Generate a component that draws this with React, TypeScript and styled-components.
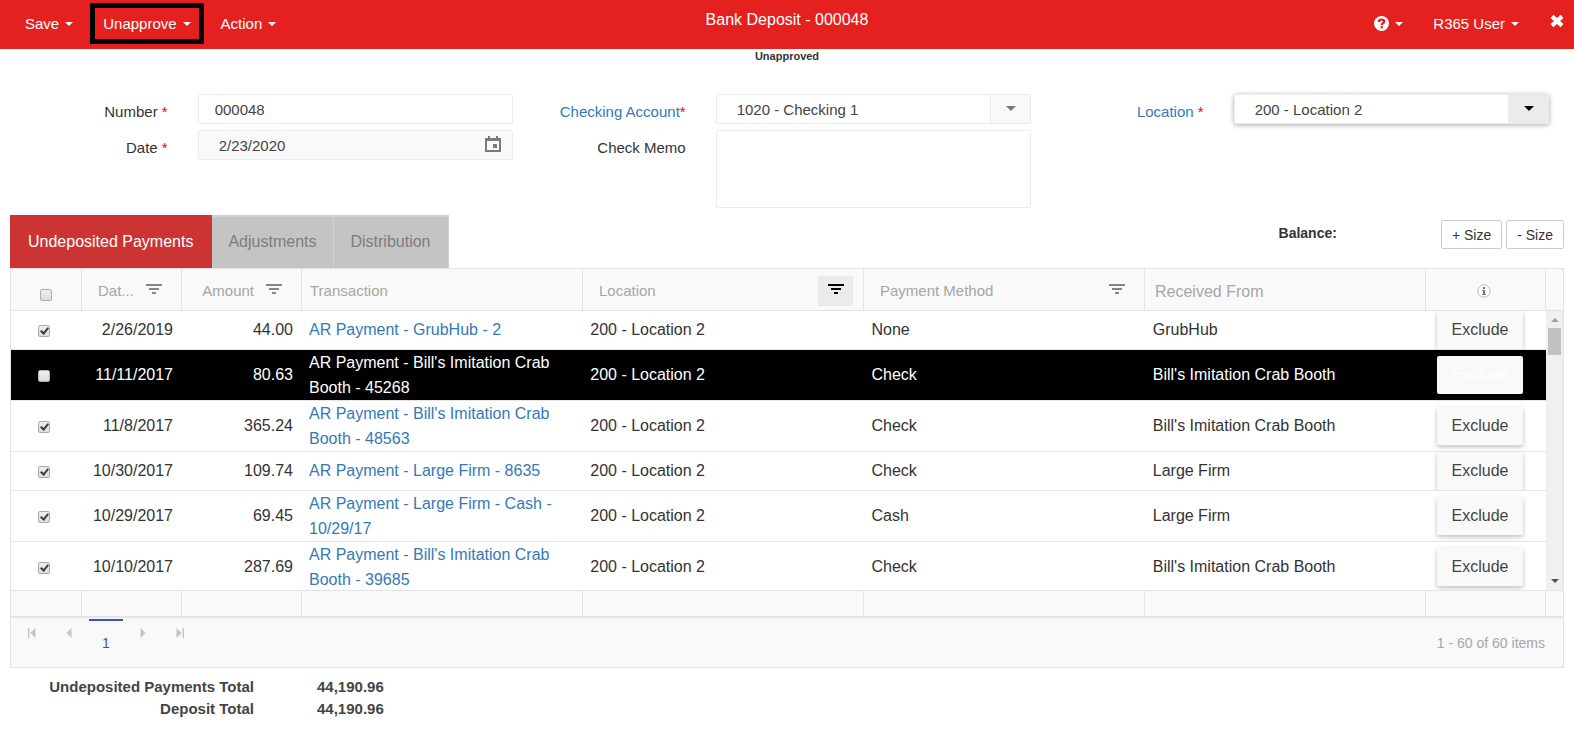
import React from "react";
import styled, { createGlobalStyle, css } from "styled-components";

const GlobalStyle = createGlobalStyle`
  *, *::before, *::after { box-sizing: border-box; }
  body {
    margin: 0;
    background: #fff;
    color: #333;
    font-family: "Liberation Sans", Arial, Helvetica, sans-serif;
    font-size: 15px;
    line-height: 20px;
  }
  button, input, select, textarea { font: inherit; color: inherit; margin: 0; }
  a { color: #337ab7; text-decoration: none; }
`;

/* ---------- top bar ---------- */

const TopBar = styled.header`
  display: grid;
  grid-template-columns: 1fr auto 1fr;
  height: 49px;
  background: #e4211f;
  color: #fff;
`;

const Menu = styled.nav`
  display: flex;
  align-items: flex-start;
  gap: 4px;
  padding: 3px 0 0 12px;
`;

const MenuButton = styled.button<{ $outlined?: boolean }>`
  display: flex;
  align-items: center;
  gap: 6px;
  height: 41px;
  padding: 0 8px;
  border: 5px solid ${(p) => (p.$outlined ? "#000" : "transparent")};
  background: none;
  white-space: nowrap;
`;

const Caret = styled.span<{ $size?: number }>`
  width: 0;
  height: 0;
  border: ${(p) => p.$size ?? 4}px solid transparent;
  border-top-color: currentColor;
  border-bottom: 0;
`;

const Title = styled.h1`
  margin: 0;
  font-size: 16px;
  font-weight: 400;
  line-height: 40px;
`;

const UserMenu = styled(Menu)`
  justify-content: flex-end;
  padding: 3px 10px 0 0;
`;

const CloseButton = styled.button`
  display: flex;
  padding: 11px 0 0 14px;
  border: 0;
  background: none;
`;

const Status = styled.div`
  font-size: 11px;
  font-weight: 700;
  line-height: 14px;
  text-align: center;
`;

/* ---------- form ---------- */

const Page = styled.main`
  padding: 0 10px;
`;

const Form = styled.form`
  display: grid;
  grid-template-columns: repeat(3, 1fr);
  padding-top: 31px;
`;

const FormColumn = styled.div`
  display: flex;
  flex-direction: column;
  gap: 6px;
`;

const FormRow = styled.div`
  display: grid;
  grid-template-columns: 1fr 2fr;
`;

const Label = styled.label`
  padding: 8px 15px 0;
  text-align: right;
  white-space: nowrap;
`;

const Required = styled.span`
  color: #f00;
`;

const Field = styled.div`
  padding: 0 15px;
`;

const control = css`
  border: 1px solid #ebebeb;
  border-radius: 2px;
  background: #fff;
  color: #444;
`;

const Control = styled.div<{ $muted?: boolean; $raised?: boolean }>`
  ${control}
  display: flex;
  height: 30px;
  overflow: hidden;
  ${(p) => p.$muted && "background: #f9f9f9;"}
  ${(p) => p.$raised && "box-shadow: 0 1px 5px rgba(0, 0, 0, 0.35);"}
`;

const TextInput = styled.input`
  flex: 1;
  min-width: 0;
  padding: 2px 16px 0;
  border: 0;
  outline: 0;
  background: none;
`;

const DateInput = styled(TextInput)`
  padding: 2px 20px 0;
`;

const IconButton = styled.button`
  display: flex;
  align-items: center;
  padding: 0 11px 2px;
  border: 0;
  background: none;
  color: #7a7a7a;
`;

const SelectBox = styled.div`
  position: relative;
  flex: 1;
  display: flex;
`;

const Select = styled.select`
  flex: 1;
  min-width: 0;
  appearance: none;
  padding: 2px 60px 0 20px;
  border: 0;
  outline: 0;
  background: none;
`;

const SelectArrow = styled.span<{ $active?: boolean }>`
  position: absolute;
  top: 0;
  right: 0;
  bottom: 0;
  display: flex;
  align-items: center;
  justify-content: center;
  width: 40px;
  padding-bottom: 2px;
  border-left: 1px solid #ebebeb;
  background: ${(p) => (p.$active ? "#ebebeb" : "#f9f9f9")};
  color: ${(p) => (p.$active ? "#000" : "#7a7a7a")};
  pointer-events: none;
`;

const Memo = styled.textarea`
  ${control}
  display: block;
  width: 100%;
  height: 78px;
  padding: 4px 16px;
  resize: none;
`;

/* ---------- tabs ---------- */

const TabBar = styled.div`
  display: flex;
  justify-content: space-between;
  align-items: flex-start;
  margin-top: 7px;
`;

const Tabs = styled.div`
  display: flex;
`;

const Tab = styled.button<{ $active?: boolean }>`
  height: 53px;
  padding: 0 17px 2px 16px;
  border: solid #d2d2d2;
  border-width: 2px 1px 0 0;
  background: #c4c4c4;
  color: #7d7d7d;
  font-size: 16px;
  ${(p) => p.$active && "padding: 0 18px 2px; border-color: #c33; background: #c33; color: #fff;"}
`;

const TabTools = styled.div`
  display: flex;
  align-items: flex-start;
  gap: 4px;
  padding-top: 5px;
`;

const Balance = styled.strong`
  margin-right: 100px;
  font-size: 14px;
  line-height: 26px;
`;

const SizeButton = styled.button`
  height: 29px;
  padding: 0 10px;
  border: 1px solid #ccc;
  border-radius: 2px;
  background: #fff;
  font-size: 14px;
`;

/* ---------- grid ---------- */

const Grid = styled.section`
  border: 1px solid #e4e4e4;
  background: #f9f9f9;
`;

const GridStrip = styled.div`
  display: grid;
  grid-template-columns: 1fr 17px;
`;

const Table = styled.table`
  width: 100%;
  border-collapse: separate;
  border-spacing: 0;
  table-layout: fixed;
`;

const StripTable = styled(Table)`
  border-right: 1px solid #e4e4e4;
`;

const HeadCell = styled.th`
  height: 42px;
  padding: 0 0 0 8px;
  border: solid #e4e4e4;
  border-width: 0 0 1px 1px;
  color: #a6a6a6;
  font-weight: 400;
  text-align: left;
  &:first-child { border-left: 0; }
`;

const HeadCorner = styled.div`
  border-bottom: 1px solid #e4e4e4;
`;

const HeadFlex = styled.div<{ $right?: boolean }>`
  display: flex;
  align-items: center;
  padding: 2px 10px 0 8px;
  & > span {
    flex: 1;
    padding-right: ${(p) => (p.$right ? 2 : 0)}px;
    text-align: ${(p) => (p.$right ? "right" : "left")};
    white-space: nowrap;
  }
`;

const FilterButton = styled.button<{ $active?: boolean }>`
  display: flex;
  flex: none;
  justify-content: center;
  width: 35px;
  height: 30px;
  padding: 8px 0 0;
  border: 0;
  background: ${(p) => (p.$active ? "#ebebeb" : "transparent")};
  color: ${(p) => (p.$active ? "#000" : "#858585")};
`;

const PlainHead = styled.div<{ $large?: boolean }>`
  padding: ${(p) => (p.$large ? "4px 0 0 2px" : "3px 0 0")};
  font-size: ${(p) => (p.$large ? 16 : 15)}px;
`;

const CenterHead = styled.div`
  display: flex;
  justify-content: center;
  padding: 3px 12px 0 0;
`;

const CheckCenter = styled.div`
  padding: 10px 8px 0 0;
`;

const TableArea = styled.div`
  display: flex;
  height: 279px;
  overflow: hidden;
  background: #fff;
`;

const TableView = styled.div`
  flex: 1;
  overflow: hidden;
`;

const Row = styled.tr<{ $selected?: boolean }>`
  background: ${(p) => (p.$selected ? "#000" : "#fff")};
  color: ${(p) => (p.$selected ? "#fff" : "#333")};
  & a { color: ${(p) => (p.$selected ? "#fff" : "#337ab7")}; }
`;

const Cell = styled.td<{ $right?: boolean }>`
  overflow: hidden;
  padding: 0 8px;
  border-bottom: 1px solid #e4e4e4;
  font-size: 16px;
  line-height: 25px;
  text-align: ${(p) => (p.$right ? "right" : "left")};
`;

const CellText = styled.div`
  min-height: 26px;
`;

const CheckCell = styled(Cell)`
  padding: 2px 4px 0 0;
`;

const ActionCell = styled(Cell)`
  padding: 0 11px;
`;

const Checkbox = styled.input.attrs({ type: "checkbox" })`
  display: block;
  width: 12px;
  height: 12px;
  margin: 0 auto;
  appearance: none;
  border: 1px solid #ababab;
  border-radius: 2px;
  background: linear-gradient(#f0f0f0, #dcdcdc);
  &:checked::after {
    content: "";
    display: block;
    width: 5px;
    height: 8px;
    margin: 0 0 0 3px;
    border: solid #3c3c3c;
    border-width: 0 2px 2px 0;
    transform: rotate(40deg);
  }
`;

const ExcludeButton = styled.button<{ $selected?: boolean }>`
  display: block;
  width: 86px;
  height: 38px;
  padding: 0 0 2px;
  border: 0;
  border-radius: 2px;
  background: #f9f9f9;
  color: ${(p) => (p.$selected ? "#fff" : "#444")};
  box-shadow: 0 2px 5px rgba(0, 0, 0, 0.26);
`;

const ScrollTrack = styled.div`
  display: flex;
  flex-direction: column;
  align-items: center;
  justify-content: space-between;
  width: 17px;
  padding: 7px 0;
  background: #f0f0f0;
  color: #505050;
`;

const ScrollTop = styled.div`
  display: flex;
  flex-direction: column;
  align-items: center;
  gap: 6px;
`;

const UpArrow = styled.span`
  border: 4px solid transparent;
  border-top: 0;
  border-bottom-color: #a0a0a0;
`;

const ScrollThumb = styled.span`
  width: 13px;
  height: 27px;
  background: #c1c1c1;
`;

const FootCell = styled.td`
  height: 26px;
  padding: 0;
  border: solid #e4e4e4;
  border-width: 1px 0 0 1px;
  &:first-child { border-left: 0; }
`;

const FootCorner = styled.div`
  border-top: 1px solid #e4e4e4;
`;

const Pager = styled.footer`
  display: flex;
  gap: 1px;
  height: 51px;
  padding: 0 18px 0 3px;
  border-top: 2px solid #e4e4e4;
  color: #a6a6a6;
  font-size: 14px;
`;

const PageArrow = styled.button`
  display: flex;
  justify-content: center;
  align-items: flex-start;
  width: 36px;
  padding: 10px 0 0;
  border: 0;
  background: none;
  color: #c4c4c4;
`;

const PageNumber = styled.button`
  width: 34px;
  height: 46px;
  margin: 1px;
  padding: 0;
  border: 0;
  border-top: 2px solid #3f51b5;
  background: none;
  color: #3f51b5;
`;

const PageInfo = styled.span`
  margin-left: auto;
  line-height: 51px;
`;

/* ---------- totals ---------- */

const Totals = styled.dl`
  display: grid;
  grid-template-columns: 244px auto;
  column-gap: 63px;
  justify-content: start;
  margin: 8px 0 0;
  color: #444;
  font-weight: 700;
  line-height: 22px;
  & dt { text-align: right; }
  & dd { margin: 0; }
`;

/* ---------- icons ---------- */

const HelpIcon = () => (
  <svg width="15" height="15" viewBox="0 0 15 15" aria-hidden="true">
    <circle cx="7.5" cy="7.5" r="7.5" fill="#fff" />
    <path d="M4.8 6C4.8 2.8 10.2 2.8 10.2 5.6C10.2 7.4 7.7 7.2 7.7 9.2" fill="none" stroke="#e4211f" strokeWidth="2.3" />
    <rect x="6.5" y="10.2" width="2.4" height="2.2" fill="#e4211f" />
  </svg>
);

const CloseIcon = () => (
  <svg width="14" height="14" viewBox="0 0 14 14" aria-hidden="true">
    <path d="M2 2.4L12 11.6M12 2.4L2 11.6" stroke="#fff" strokeWidth="4.2" />
  </svg>
);

const CalendarIcon = () => (
  <svg width="16" height="16" viewBox="0 0 16 16" aria-hidden="true">
    <path
      fill="currentColor"
      fillRule="evenodd"
      d="M3 0h2v2h6V0h2v2h3v14H0V2h3zM2 5v9h12V5zM8 8h4v4H8z"
    />
  </svg>
);

const FilterIcon = () => (
  <svg width="16" height="10" viewBox="0 0 16 10" aria-hidden="true">
    <path fill="currentColor" d="M0 0h16v2H0zM3 4h10v2H3zM6 8h4v2H6z" />
  </svg>
);

const InfoIcon = () => (
  <svg width="14" height="14" viewBox="0 0 14 14" role="img" aria-label="Information">
    <circle cx="7" cy="7" r="6.2" fill="#fff" stroke="#bbb" />
    <path fill="#778" d="M6 3h2v2H6zM5 6h3v4h1v1H5v-1h1V7H5z" />
  </svg>
);

const ArrowIcon = ({ next, end }: { next?: boolean; end?: boolean }) => (
  <svg width="8" height="10" viewBox="0 0 8 10" aria-hidden="true">
    <g fill="currentColor" transform={next ? "rotate(180 4 5)" : undefined}>
      <path d={end ? "M7.5 0v10L2.5 5z" : "M6.5 0v10L1.5 5z"} />
      {end && <path d="M0 0h1.4v10H0z" />}
    </g>
  </svg>
);

/* ---------- data ---------- */

type Payment = {
  date: string;
  amount: string;
  name: string;
  method: string;
  from: string;
  selected?: boolean;
};

const payments: Payment[] = [
  { date: "2/26/2019", amount: "44.00", name: "AR Payment - GrubHub - 2", method: "None", from: "GrubHub" },
  { date: "11/11/2017", amount: "80.63", name: "AR Payment - Bill's Imitation Crab Booth - 45268", method: "Check", from: "Bill's Imitation Crab Booth", selected: true },
  { date: "11/8/2017", amount: "365.24", name: "AR Payment - Bill's Imitation Crab Booth - 48563", method: "Check", from: "Bill's Imitation Crab Booth" },
  { date: "10/30/2017", amount: "109.74", name: "AR Payment - Large Firm - 8635", method: "Check", from: "Large Firm" },
  { date: "10/29/2017", amount: "69.45", name: "AR Payment - Large Firm - Cash - 10/29/17", method: "Cash", from: "Large Firm" },
  { date: "10/10/2017", amount: "287.69", name: "AR Payment - Bill's Imitation Crab Booth - 39685", method: "Check", from: "Bill's Imitation Crab Booth" },
];

const columnWidths = [70, 100, 120, undefined, undefined, undefined, undefined, 120];

const Columns = () => (
  <colgroup>
    {columnWidths.map((width, i) => (
      <col key={i} width={width} />
    ))}
  </colgroup>
);

export default function App() {
  return (
    <>
      <GlobalStyle />
      <TopBar>
        <Menu>
          <MenuButton>Save<Caret /></MenuButton>
          <MenuButton $outlined>Unapprove<Caret /></MenuButton>
          <MenuButton>Action<Caret /></MenuButton>
        </Menu>
        <Title>Bank Deposit - 000048</Title>
        <UserMenu>
          <MenuButton aria-label="Help"><HelpIcon /><Caret /></MenuButton>
          <MenuButton>R365 User<Caret /></MenuButton>
          <CloseButton aria-label="Close"><CloseIcon /></CloseButton>
        </UserMenu>
      </TopBar>
      <Status>Unapproved</Status>

      <Page>
        <Form>
          <FormColumn>
            <FormRow>
              <Label htmlFor="number">Number <Required>*</Required></Label>
              <Field>
                <Control><TextInput id="number" defaultValue="000048" /></Control>
              </Field>
            </FormRow>
            <FormRow>
              <Label htmlFor="date">Date <Required>*</Required></Label>
              <Field>
                <Control $muted>
                  <DateInput id="date" defaultValue="2/23/2020" />
                  <IconButton type="button" aria-label="Open calendar"><CalendarIcon /></IconButton>
                </Control>
              </Field>
            </FormRow>
          </FormColumn>
          <FormColumn>
            <FormRow>
              <Label htmlFor="account"><a href="#account">Checking Account</a><Required>*</Required></Label>
              <Field>
                <Control>
                  <SelectBox>
                    <Select id="account"><option>1020 - Checking 1</option></Select>
                    <SelectArrow><Caret $size={5} /></SelectArrow>
                  </SelectBox>
                </Control>
              </Field>
            </FormRow>
            <FormRow>
              <Label htmlFor="memo">Check Memo</Label>
              <Field><Memo id="memo" /></Field>
            </FormRow>
          </FormColumn>
          <FormColumn>
            <FormRow>
              <Label htmlFor="location"><a href="#location">Location</a> <Required>*</Required></Label>
              <Field>
                <Control $raised>
                  <SelectBox>
                    <Select id="location"><option>200 - Location 2</option></Select>
                    <SelectArrow $active><Caret $size={5} /></SelectArrow>
                  </SelectBox>
                </Control>
              </Field>
            </FormRow>
          </FormColumn>
        </Form>

        <TabBar>
          <Tabs role="tablist">
            <Tab role="tab" aria-selected $active>Undeposited Payments</Tab>
            <Tab role="tab">Adjustments</Tab>
            <Tab role="tab">Distribution</Tab>
          </Tabs>
          <TabTools>
            <Balance>Balance:</Balance>
            <SizeButton>+ Size</SizeButton>
            <SizeButton>- Size</SizeButton>
          </TabTools>
        </TabBar>

        <Grid>
          <GridStrip>
            <StripTable>
              <Columns />
              <thead>
                <tr>
                  <HeadCell><CheckCenter><Checkbox aria-label="Select all payments" /></CheckCenter></HeadCell>
                  <HeadCell><HeadFlex><span>Dat...</span><FilterButton aria-label="Filter date"><FilterIcon /></FilterButton></HeadFlex></HeadCell>
                  <HeadCell><HeadFlex $right><span>Amount</span><FilterButton aria-label="Filter amount"><FilterIcon /></FilterButton></HeadFlex></HeadCell>
                  <HeadCell><PlainHead>Transaction</PlainHead></HeadCell>
                  <HeadCell><HeadFlex><span>Location</span><FilterButton $active aria-label="Filter location"><FilterIcon /></FilterButton></HeadFlex></HeadCell>
                  <HeadCell><HeadFlex><span>Payment Method</span><FilterButton aria-label="Filter payment method"><FilterIcon /></FilterButton></HeadFlex></HeadCell>
                  <HeadCell><PlainHead $large>Received From</PlainHead></HeadCell>
                  <HeadCell><CenterHead><InfoIcon /></CenterHead></HeadCell>
                </tr>
              </thead>
            </StripTable>
            <HeadCorner />
          </GridStrip>

          <TableArea>
            <TableView>
              <Table>
                <Columns />
                <tbody>
                  {payments.map((p) => (
                    <Row key={p.name} $selected={p.selected}>
                      <CheckCell><Checkbox aria-label={p.name} defaultChecked={!p.selected} /></CheckCell>
                      <Cell $right><CellText>{p.date}</CellText></Cell>
                      <Cell $right><CellText>{p.amount}</CellText></Cell>
                      <Cell><CellText><a href="#payment">{p.name}</a></CellText></Cell>
                      <Cell><CellText>200 - Location 2</CellText></Cell>
                      <Cell><CellText>{p.method}</CellText></Cell>
                      <Cell><CellText>{p.from}</CellText></Cell>
                      <ActionCell><ExcludeButton $selected={p.selected}>Exclude</ExcludeButton></ActionCell>
                    </Row>
                  ))}
                </tbody>
              </Table>
            </TableView>
            <ScrollTrack aria-hidden="true">
              <ScrollTop>
                <UpArrow />
                <ScrollThumb />
              </ScrollTop>
              <Caret />
            </ScrollTrack>
          </TableArea>

          <GridStrip>
            <StripTable>
              <Columns />
              <tbody>
                <tr>
                  {columnWidths.map((_, i) => (
                    <FootCell key={i} />
                  ))}
                </tr>
              </tbody>
            </StripTable>
            <FootCorner />
          </GridStrip>

          <Pager>
            <PageArrow aria-label="First page"><ArrowIcon end /></PageArrow>
            <PageArrow aria-label="Previous page"><ArrowIcon /></PageArrow>
            <PageNumber>1</PageNumber>
            <PageArrow aria-label="Next page"><ArrowIcon next /></PageArrow>
            <PageArrow aria-label="Last page"><ArrowIcon next end /></PageArrow>
            <PageInfo>1 - 60 of 60 items</PageInfo>
          </Pager>
        </Grid>

        <Totals>
          <dt>Undeposited Payments Total</dt>
          <dd>44,190.96</dd>
          <dt>Deposit Total</dt>
          <dd>44,190.96</dd>
        </Totals>
      </Page>
    </>
  );
}
